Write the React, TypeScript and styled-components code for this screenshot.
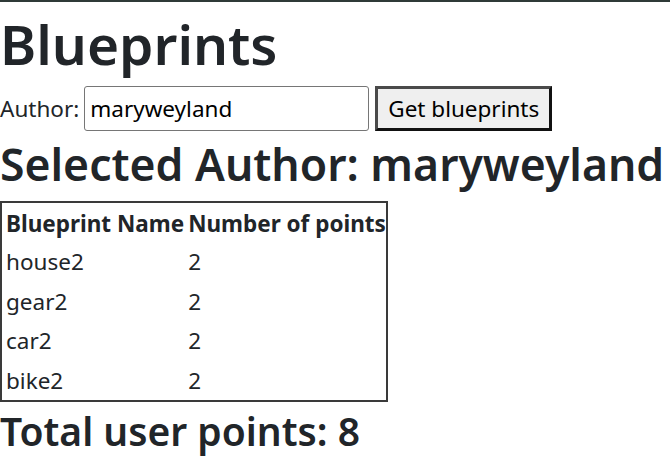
import React from "react";
import styled, { createGlobalStyle } from "styled-components";

const GlobalStyle = createGlobalStyle`
  body {
    margin: 0;
    font-family: "Noto Sans", "Open Sans", sans-serif;
    color: #212529;
    background: #fff;
    border-top: 2px solid #2f3a38;
  }
`;

const Page = styled.div`
  display: flex;
  flex-direction: column;
  align-items: flex-start;
`;

const Title = styled.h1`
  margin: 0;
  font-size: 55px;
  font-weight: 600;
  line-height: 84px;
`;

const Form = styled.div`
  display: flex;
  align-items: center;
  gap: 5px;
  font-size: 22.5px;
`;

const Input = styled.input`
  width: 285px;
  height: 45px;
  box-sizing: border-box;
  border: 1px solid #767676;
  border-radius: 3px;
  padding: 0 5px;
  margin-right: 1px;
  font-family: inherit;
  font-size: 22.5px;
  color: #000;
`;

const Button = styled.button`
  height: 45px;
  box-sizing: border-box;
  padding: 0 10px;
  background: #efefef;
  border: 3px solid #4a4a4a;
  border-right-color: #111;
  border-bottom-color: #111;
  font-family: inherit;
  font-size: 22.5px;
  color: #000;
`;

const Selected = styled.h1`
  margin: 0;
  font-size: 44.5px;
  font-weight: 600;
  line-height: 66px;
  margin-bottom: 2px;
`;

const Table = styled.table`
  border: 2px solid #3a3a3a;
  border-spacing: 0;
  font-size: 22.5px;
  margin-top: 2px;
`;

const Th = styled.th`
  text-align: left;
  padding: 4px 0 2px 4px;
  line-height: 33.4px;
  font-weight: 700;
`;

const Td = styled.td`
  padding: 3px 0 3px 4px;
  line-height: 33.4px;
`;

const Total = styled.h2`
  margin: 0;
  font-size: 39px;
  font-weight: 600;
  line-height: 58px;
`;

const blueprints = [
  { name: "house2", points: 2 },
  { name: "gear2", points: 2 },
  { name: "car2", points: 2 },
  { name: "bike2", points: 2 },
];

export default function App() {
  const total = blueprints.reduce((sum, b) => sum + b.points, 0);
  return (
    <>
      <GlobalStyle />
      <Page>
        <Title>Blueprints</Title>
        <Form>
          <label>Author:</label>
          <Input defaultValue="maryweyland" />
          <Button>Get blueprints</Button>
        </Form>
        <Selected>Selected Author: maryweyland</Selected>
        <Table>
          <thead>
            <tr>
              <Th>Blueprint Name</Th>
              <Th>Number of points</Th>
            </tr>
          </thead>
          <tbody>
            {blueprints.map((b) => (
              <tr key={b.name}>
                <Td>{b.name}</Td>
                <Td>{b.points}</Td>
              </tr>
            ))}
          </tbody>
        </Table>
        <Total>Total user points: {total}</Total>
      </Page>
    </>
  );
}
